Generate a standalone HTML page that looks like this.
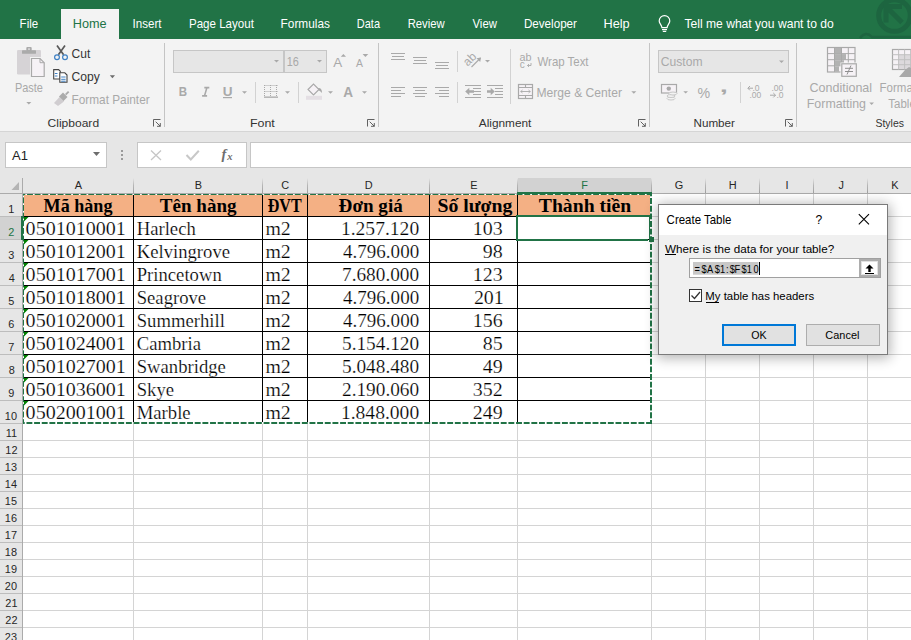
<!DOCTYPE html><html><head><meta charset="utf-8"><style>
*{margin:0;padding:0}html,body{width:911px;height:640px;overflow:hidden;background:#fff}
svg{display:block}text{white-space:pre}
</style></head><body><svg width="911" height="640" viewBox="0 0 911 640" shape-rendering="auto">
<defs><linearGradient id="hsep" x1="0" y1="0" x2="0" y2="1"><stop offset="0" stop-color="#E6E6E6"/><stop offset="0.5" stop-color="#B5B5B5"/><stop offset="1" stop-color="#A0A0A0"/></linearGradient></defs>
<rect x="0" y="0" width="911" height="39" fill="#217346" />
<rect x="61" y="9" width="58" height="31" fill="#F3F3F3" />
<rect x="0" y="39" width="911" height="92" fill="#F3F3F3" />
<rect x="0" y="131" width="911" height="1" fill="#D5D5D5" />
<rect x="0" y="132" width="911" height="62" fill="#E6E6E6" />
<rect x="5" y="142" width="102" height="26" fill="#C6C6C6" />
<rect x="6" y="143" width="100" height="24" fill="#fff" />
<rect x="137" y="142" width="110" height="26" fill="#C6C6C6" />
<rect x="138" y="143" width="108" height="24" fill="#fff" />
<rect x="250" y="142" width="661" height="26" fill="#C6C6C6" />
<rect x="251" y="143" width="660" height="24" fill="#fff" />
<rect x="23" y="194" width="888" height="446" fill="#fff" />
<rect x="0" y="194" width="22" height="446" fill="#E6E6E6" />
<rect x="23" y="216" width="888" height="1" fill="#D4D4D4" />
<rect x="0" y="216" width="22" height="1" fill="#BDBDBD" />
<rect x="23" y="239" width="888" height="1" fill="#D4D4D4" />
<rect x="0" y="239" width="22" height="1" fill="#BDBDBD" />
<rect x="23" y="262" width="888" height="1" fill="#D4D4D4" />
<rect x="0" y="262" width="22" height="1" fill="#BDBDBD" />
<rect x="23" y="285" width="888" height="1" fill="#D4D4D4" />
<rect x="0" y="285" width="22" height="1" fill="#BDBDBD" />
<rect x="23" y="308" width="888" height="1" fill="#D4D4D4" />
<rect x="0" y="308" width="22" height="1" fill="#BDBDBD" />
<rect x="23" y="331" width="888" height="1" fill="#D4D4D4" />
<rect x="0" y="331" width="22" height="1" fill="#BDBDBD" />
<rect x="23" y="354" width="888" height="1" fill="#D4D4D4" />
<rect x="0" y="354" width="22" height="1" fill="#BDBDBD" />
<rect x="23" y="377" width="888" height="1" fill="#D4D4D4" />
<rect x="0" y="377" width="22" height="1" fill="#BDBDBD" />
<rect x="23" y="400" width="888" height="1" fill="#D4D4D4" />
<rect x="0" y="400" width="22" height="1" fill="#BDBDBD" />
<rect x="23" y="423" width="888" height="1" fill="#D4D4D4" />
<rect x="0" y="423" width="22" height="1" fill="#BDBDBD" />
<rect x="23" y="440" width="888" height="1" fill="#D4D4D4" />
<rect x="0" y="440" width="22" height="1" fill="#BDBDBD" />
<rect x="23" y="457" width="888" height="1" fill="#D4D4D4" />
<rect x="0" y="457" width="22" height="1" fill="#BDBDBD" />
<rect x="23" y="474" width="888" height="1" fill="#D4D4D4" />
<rect x="0" y="474" width="22" height="1" fill="#BDBDBD" />
<rect x="23" y="491" width="888" height="1" fill="#D4D4D4" />
<rect x="0" y="491" width="22" height="1" fill="#BDBDBD" />
<rect x="23" y="508" width="888" height="1" fill="#D4D4D4" />
<rect x="0" y="508" width="22" height="1" fill="#BDBDBD" />
<rect x="23" y="525" width="888" height="1" fill="#D4D4D4" />
<rect x="0" y="525" width="22" height="1" fill="#BDBDBD" />
<rect x="23" y="542" width="888" height="1" fill="#D4D4D4" />
<rect x="0" y="542" width="22" height="1" fill="#BDBDBD" />
<rect x="23" y="559" width="888" height="1" fill="#D4D4D4" />
<rect x="0" y="559" width="22" height="1" fill="#BDBDBD" />
<rect x="23" y="576" width="888" height="1" fill="#D4D4D4" />
<rect x="0" y="576" width="22" height="1" fill="#BDBDBD" />
<rect x="23" y="593" width="888" height="1" fill="#D4D4D4" />
<rect x="0" y="593" width="22" height="1" fill="#BDBDBD" />
<rect x="23" y="610" width="888" height="1" fill="#D4D4D4" />
<rect x="0" y="610" width="22" height="1" fill="#BDBDBD" />
<rect x="23" y="627" width="888" height="1" fill="#D4D4D4" />
<rect x="0" y="627" width="22" height="1" fill="#BDBDBD" />
<rect x="133" y="194" width="1" height="446" fill="#D4D4D4" />
<rect x="133" y="178" width="1" height="15" fill="url(#hsep)" />
<rect x="262" y="194" width="1" height="446" fill="#D4D4D4" />
<rect x="262" y="178" width="1" height="15" fill="url(#hsep)" />
<rect x="307" y="194" width="1" height="446" fill="#D4D4D4" />
<rect x="307" y="178" width="1" height="15" fill="url(#hsep)" />
<rect x="429" y="194" width="1" height="446" fill="#D4D4D4" />
<rect x="429" y="178" width="1" height="15" fill="url(#hsep)" />
<rect x="517" y="194" width="1" height="446" fill="#D4D4D4" />
<rect x="517" y="178" width="1" height="15" fill="url(#hsep)" />
<rect x="651" y="194" width="1" height="446" fill="#D4D4D4" />
<rect x="651" y="178" width="1" height="15" fill="url(#hsep)" />
<rect x="705" y="194" width="1" height="446" fill="#D4D4D4" />
<rect x="705" y="178" width="1" height="15" fill="url(#hsep)" />
<rect x="759" y="194" width="1" height="446" fill="#D4D4D4" />
<rect x="759" y="178" width="1" height="15" fill="url(#hsep)" />
<rect x="813" y="194" width="1" height="446" fill="#D4D4D4" />
<rect x="813" y="178" width="1" height="15" fill="url(#hsep)" />
<rect x="867" y="194" width="1" height="446" fill="#D4D4D4" />
<rect x="867" y="178" width="1" height="15" fill="url(#hsep)" />
<rect x="0" y="193" width="911" height="1" fill="#ABABAB" />
<rect x="22" y="178" width="1" height="462" fill="#ABABAB" />
<path d="M19 182 L19 190 L11.5 190 Z" fill="#B4B4B4"/>
<rect x="518" y="178" width="133" height="14" fill="#D2D2D2" />
<rect x="517" y="192" width="135" height="2" fill="#217346" />
<rect x="0" y="217" width="21" height="22" fill="#D2D2D2" />
<rect x="21" y="216" width="2" height="24" fill="#217346" />
<rect x="23" y="194" width="628" height="22" fill="#F4B084" />
<rect x="23" y="216" width="628" height="1" fill="#000" />
<rect x="23" y="239" width="628" height="1" fill="#000" />
<rect x="23" y="262" width="628" height="1" fill="#000" />
<rect x="23" y="285" width="628" height="1" fill="#000" />
<rect x="23" y="308" width="628" height="1" fill="#000" />
<rect x="23" y="331" width="628" height="1" fill="#000" />
<rect x="23" y="354" width="628" height="1" fill="#000" />
<rect x="23" y="377" width="628" height="1" fill="#000" />
<rect x="23" y="400" width="628" height="1" fill="#000" />
<rect x="133" y="194" width="1" height="229" fill="#000" />
<rect x="262" y="194" width="1" height="229" fill="#000" />
<rect x="307" y="194" width="1" height="229" fill="#000" />
<rect x="429" y="194" width="1" height="229" fill="#000" />
<rect x="517" y="194" width="1" height="229" fill="#000" />
<path d="M23 217 L28.5 217 L23 222.5 Z" fill="#008000"/>
<path d="M23 240 L28.5 240 L23 245.5 Z" fill="#008000"/>
<path d="M23 263 L28.5 263 L23 268.5 Z" fill="#008000"/>
<path d="M23 286 L28.5 286 L23 291.5 Z" fill="#008000"/>
<path d="M23 309 L28.5 309 L23 314.5 Z" fill="#008000"/>
<path d="M23 332 L28.5 332 L23 337.5 Z" fill="#008000"/>
<path d="M23 355 L28.5 355 L23 360.5 Z" fill="#008000"/>
<path d="M23 378 L28.5 378 L23 383.5 Z" fill="#008000"/>
<path d="M23 401 L28.5 401 L23 406.5 Z" fill="#008000"/>
<rect x="516" y="215" width="134" height="2" fill="#217346" />
<rect x="516" y="239" width="132" height="2" fill="#217346" />
<rect x="516" y="215" width="2" height="26" fill="#217346" />
<g fill="none" stroke-width="1">
<line x1="23" y1="194.5" x2="651" y2="194.5" stroke="#fff"/>
<line x1="23" y1="194.5" x2="651" y2="194.5" stroke="#217346" stroke-dasharray="5.9 1.75" stroke-dashoffset="3.6"/>
<line x1="23.5" y1="194" x2="23.5" y2="424" stroke="#fff"/>
<line x1="23.5" y1="194" x2="23.5" y2="424" stroke="#217346" stroke-dasharray="5.9 1.75" stroke-dashoffset="4.3"/>
</g><g fill="none" stroke-width="2">
<line x1="651" y1="194" x2="651" y2="424" stroke="#fff" stroke-width="2"/>
<line x1="651" y1="194" x2="651" y2="424" stroke="#217346" stroke-width="2" stroke-dasharray="5.9 1.75" stroke-dashoffset="-4.1"/>
<line x1="23" y1="423" x2="652" y2="423" stroke="#fff"/>
<line x1="652" y1="423" x2="23" y2="423" stroke="#217346" stroke-dasharray="5.9 1.75"/>
</g>
<rect x="649" y="215" width="1" height="25" fill="#217346" />
<rect x="649" y="237" width="5" height="5" fill="#217346" />
<filter id="sh" x="-30%" y="-30%" width="160%" height="160%"><feGaussianBlur stdDeviation="6.5"/></filter>
<rect x="657" y="204" width="233" height="154" fill="#000" opacity="0.3" filter="url(#sh)"/>
<rect x="658" y="204" width="230" height="151" fill="#7A7A7A" />
<rect x="659" y="205" width="228" height="149" fill="#F0F0F0" />
<rect x="659" y="205" width="228" height="30" fill="#fff" />
<path d="M858.8 214.2 L869 224.4 M869 214.2 L858.8 224.4" stroke="#000" stroke-width="1.1" fill="none"/>
<rect x="665" y="254" width="11" height="1" fill="#000" />
<rect x="706" y="302" width="13" height="1" fill="#000" />
<rect x="689" y="258" width="192" height="20" fill="#A0A0A0" />
<rect x="690" y="259" width="190" height="18" fill="#fff" />
<rect x="693" y="262" width="65.5" height="12.7" fill="#C8C8C8" />
<rect x="759" y="262" width="1" height="13" fill="#000" />
<rect x="859" y="259" width="21" height="18" fill="#ADADAD" />
<rect x="861" y="261" width="17" height="14" fill="#E1E1E1" />
<rect x="862" y="262" width="15" height="12" fill="#fff" />
<path d="M869.5 264.5 L865.5 268.5 L868.3 268.5 L868.3 272 L870.7 272 L870.7 268.5 L873.5 268.5 Z" fill="#000"/>
<rect x="865" y="273" width="9" height="1" fill="#000" />
<rect x="689" y="289" width="13" height="13" fill="#333" />
<rect x="690" y="290" width="11" height="11" fill="#fff" />
<path d="M691.5 295.5 L694.5 298.5 L700 292" stroke="#333" stroke-width="1.3" fill="none"/>
<rect x="722" y="324" width="74" height="22" fill="#0078D7" />
<rect x="724" y="326" width="70" height="18" fill="#E1E1E1" />
<rect x="806" y="324" width="74" height="22" fill="#ADADAD" />
<rect x="807" y="325" width="72" height="20" fill="#E1E1E1" />
<g fill="none" stroke="#1D6540" stroke-width="5"><circle cx="894.5" cy="15.5" r="15.8"/><path d="M886 22.5 V6.5 H902 M886.5 7 L902 22.5"/></g>
<path d="M860 38 Q866 30.5 872 37 L911 37" stroke="#1D6540" stroke-width="2.4" fill="none"/>
<g fill="none" stroke="#fff" stroke-width="1.2"><path d="M661.9 27.6 C661.9 25 659.2 23.6 659.2 20.9 A5.3 5.3 0 0 1 669.8 20.9 C669.8 23.6 667.1 25 667.1 27.6 Z"/><path d="M662 29.6 H667"/><path d="M662.8 31.4 H666.2"/></g>
<rect x="17" y="50" width="24" height="24.5" rx="1.2" fill="#D6D3D6"/>
<rect x="22" y="50.2" width="14" height="3.6" rx="0.6" fill="#ABABAB"/>
<rect x="26.3" y="47" width="5.4" height="4" rx="1" fill="#ABABAB"/><rect x="28.3" y="48.4" width="1.4" height="1.4" fill="#F3F3F3"/>
<path d="M30 57 H40.5 L45.7 62.2 V78 H30 Z" fill="#F3F3F3"/>
<path d="M31.5 58.5 H40 L44.2 62.7 V76.5 H31.5 Z" fill="#F6F2F6" stroke="#A9A9A9" stroke-width="1.2"/>
<path d="M40 58.5 V62.7 H44.2" fill="none" stroke="#A9A9A9" stroke-width="1"/>
<path d="M26.3 102 H31.3 L28.8 104.6 Z" fill="#A9A9A9"/>
<path d="M57 45.5 L63.6 54.8 M65 45.5 L58.4 54.8" stroke="#595959" stroke-width="1.7" fill="none"/>
<g fill="none" stroke="#3E80C4" stroke-width="1.2"><circle cx="57" cy="57.2" r="2.4"/><circle cx="65" cy="57.2" r="2.4"/></g>
<path d="M53.7 69.6 H58.6 L60.3 71.3 V79 H53.7 Z" fill="#fff" stroke="#444" stroke-width="1.1"/>
<path d="M59.8 72.8 H64.8 L67 75 V82.2 H59.8 Z" fill="#fff" stroke="#444" stroke-width="1.1"/>
<g stroke="#3E80C4" stroke-width="1"><path d="M54.8 73.5 H57.5 M54.8 76 H57.5"/><path d="M61.2 77 H65.6 M61.2 79.3 H65.6 M61.2 81.2 H65.6"/></g>
<path d="M109.8 75.2 H115 L112.4 78.2 Z" fill="#6D6D6D"/>
<path d="M54 103 L59.5 97 L64 101.5 L58 106 Z" fill="#D0CDD0"/>
<path d="M59 96.5 L63 92.5 L67.5 97 L63.5 101 Z" fill="#ABABAB"/>
<path d="M65 94 L68 91 L69.3 92.3 L66.3 95.3 Z" fill="#ABABAB"/>
<g fill="none" stroke="#505050" stroke-width="0.9"><path d="M153.5 126.5 V119.5 H160.5"/><path d="M155.7 121.7 L160.3 126.3 M157.0 126.3 H160.3 V123.0"/></g>
<g fill="none" stroke="#505050" stroke-width="0.9"><path d="M367.5 126.5 V119.5 H374.5"/><path d="M369.7 121.7 L374.3 126.3 M371.0 126.3 H374.3 V123.0"/></g>
<g fill="none" stroke="#505050" stroke-width="0.9"><path d="M638.5 126.5 V119.5 H645.5"/><path d="M640.7 121.7 L645.3 126.3 M642.0 126.3 H645.3 V123.0"/></g>
<g fill="none" stroke="#505050" stroke-width="0.9"><path d="M785.5 126.5 V119.5 H792.5"/><path d="M787.7 121.7 L792.3 126.3 M789.0 126.3 H792.3 V123.0"/></g>
<rect x="164" y="43" width="1" height="84" fill="#C4C4C4" />
<rect x="378" y="43" width="1" height="84" fill="#C4C4C4" />
<rect x="649" y="43" width="1" height="84" fill="#C4C4C4" />
<rect x="796" y="43" width="1" height="84" fill="#C4C4C4" />
<rect x="173" y="50" width="154" height="23" fill="#C6C6C6" />
<rect x="174" y="51" width="109" height="21" fill="#E6E6E6" />
<rect x="285" y="51" width="41" height="21" fill="#E6E6E6" />
<path d="M274 60 H279 L276.5 62.6 Z" fill="#A9A9A9"/><path d="M317 60 H322 L319.5 62.6 Z" fill="#A9A9A9"/>
<path d="M340.8 56.8 L343.4 53.9 L346 56.8 Z" fill="#A9A9A9"/><path d="M362.6 53.9 H368.3 L365.4 57 Z" fill="#A9A9A9"/>
<path d="M242 91.2 H247 L244.5 93.8 Z" fill="#A9A9A9"/>
<path d="M285 91.2 H290 L287.5 93.8 Z" fill="#A9A9A9"/>
<path d="M328 91.2 H333 L330.5 93.8 Z" fill="#A9A9A9"/>
<path d="M362 91.2 H367 L364.5 93.8 Z" fill="#A9A9A9"/>
<rect x="255" y="82" width="1" height="21" fill="#D2D2D2" />
<rect x="298" y="82" width="1" height="21" fill="#D2D2D2" />
<path d="M204.3 87.6 H209.3 M206.9 87.6 L204.5 95.9 M202.1 95.9 H207.1" stroke="#A9A9A9" stroke-width="1.6" fill="none"/>
<rect x="223" y="97" width="9" height="1.2" fill="#A9A9A9" />
<g fill="none" stroke="#A9A9A9" stroke-width="1" stroke-dasharray="1 1"><path d="M264.5 85.5 H277.5 M264.5 91.5 H277.5 M264.5 85 V97 M270.5 85 V97 M276.5 85 V97"/></g>
<rect x="264" y="96.5" width="14" height="1.3" fill="#A9A9A9" />
<g fill="none" stroke="#A9A9A9" stroke-width="1.1"><path d="M313.5 84.5 V89"/><path d="M308 89.5 L313.5 84 L319 89.5 L313.5 95 Z" fill="#F6F2F6"/></g>
<path d="M318 88 Q322 87.5 322 93 Q320.5 91 319 90.5 Z" fill="#A9A9A9"/>
<rect x="306" y="95.8" width="16" height="4" fill="#E4DFE4" />
<rect x="391" y="53" width="14" height="1" fill="#A9A9A9" />
<rect x="392" y="56" width="12" height="1" fill="#A9A9A9" />
<rect x="391" y="59" width="14" height="1" fill="#A9A9A9" />
<rect x="413" y="57" width="14" height="1" fill="#A9A9A9" />
<rect x="414" y="60" width="12" height="1" fill="#A9A9A9" />
<rect x="413" y="63" width="14" height="1" fill="#A9A9A9" />
<rect x="435" y="62" width="14" height="1" fill="#A9A9A9" />
<rect x="436" y="65" width="12" height="1" fill="#A9A9A9" />
<rect x="435" y="68" width="14" height="1" fill="#A9A9A9" />
<rect x="391" y="87" width="14" height="1" fill="#A9A9A9" />
<rect x="391" y="90" width="10" height="1" fill="#A9A9A9" />
<rect x="391" y="93" width="14" height="1" fill="#A9A9A9" />
<rect x="391" y="96" width="10" height="1" fill="#A9A9A9" />
<rect x="413" y="87" width="14" height="1" fill="#A9A9A9" />
<rect x="415" y="90" width="10" height="1" fill="#A9A9A9" />
<rect x="413" y="93" width="14" height="1" fill="#A9A9A9" />
<rect x="415" y="96" width="10" height="1" fill="#A9A9A9" />
<rect x="435" y="87" width="14" height="1" fill="#A9A9A9" />
<rect x="439" y="90" width="10" height="1" fill="#A9A9A9" />
<rect x="435" y="93" width="14" height="1" fill="#A9A9A9" />
<rect x="439" y="96" width="10" height="1" fill="#A9A9A9" />
<rect x="457" y="51" width="1" height="21" fill="#D2D2D2" />
<rect x="457" y="82" width="1" height="21" fill="#D2D2D2" />
<rect x="510" y="49" width="1" height="55" fill="#D2D2D2" />
<text transform="translate(467.8 66.8) rotate(-45)" font-family="Liberation Sans" font-size="12" fill="#A9A9A9">ab</text>
<path d="M471.5 67 L480.5 58" stroke="#A9A9A9" stroke-width="1.1"/><path d="M481 57.5 L476.5 58.3 L480.2 62 Z" fill="#A9A9A9"/>
<path d="M485 60 H490 L487.5 62.6 Z" fill="#A9A9A9"/>
<rect x="465" y="85" width="16" height="1" fill="#A9A9A9" />
<rect x="473" y="88" width="8" height="1" fill="#A9A9A9" />
<rect x="473" y="91" width="8" height="1" fill="#A9A9A9" />
<rect x="473" y="94" width="8" height="1" fill="#A9A9A9" />
<rect x="465" y="97" width="16" height="1" fill="#A9A9A9" />
<rect x="487" y="85" width="16" height="1" fill="#A9A9A9" />
<rect x="495" y="88" width="8" height="1" fill="#A9A9A9" />
<rect x="495" y="91" width="8" height="1" fill="#A9A9A9" />
<rect x="495" y="94" width="8" height="1" fill="#A9A9A9" />
<rect x="487" y="97" width="16" height="1" fill="#A9A9A9" />
<path d="M465.2 91.5 L469.3 87.8 V90.3 H474 V92.7 H469.3 V95.2 Z" fill="#A9A9A9"/>
<path d="M494.8 91.5 L490.7 87.8 V90.3 H487 V92.7 H490.7 V95.2 Z" fill="#A9A9A9"/>
<text x="519.5" y="60.5" font-family="Liberation Sans" font-size="10" fill="#A9A9A9" textLength="12" lengthAdjust="spacingAndGlyphs">ab</text>
<text x="519.8" y="68" font-family="Liberation Sans" font-size="10" fill="#A9A9A9">c</text>
<path d="M531 63 V65.5 H527.5 M529 64 L527.5 65.5 L529 67" fill="none" stroke="#A9A9A9" stroke-width="0.9"/>
<rect x="518.5" y="84.5" width="14" height="14" fill="#F6F2F6" stroke="#A9A9A9" stroke-width="1.2"/>
<path d="M518.5 87.5 H532.5 M518.5 95.5 H532.5 M525.5 84.5 V87.5 M525.5 95.5 V98.5" stroke="#A9A9A9" stroke-width="1.1" fill="none"/>
<path d="M520.5 91.5 H530.5 M522.5 90 L520.8 91.5 L522.5 93 M528.5 90 L530.2 91.5 L528.5 93" stroke="#A9A9A9" stroke-width="0.9" fill="none"/>
<path d="M631.3 91.2 H636.3 L633.8 93.8 Z" fill="#A9A9A9"/>
<rect x="658" y="50" width="131" height="23" fill="#C6C6C6" />
<rect x="659" y="51" width="129" height="21" fill="#E6E6E6" />
<path d="M779 60.5 H784 L781.5 63 Z" fill="#A9A9A9"/>
<rect x="661.5" y="84.5" width="15" height="8.5" fill="#F6F2F6" stroke="#A9A9A9" stroke-width="1.2"/>
<circle cx="668.8" cy="88.6" r="2.2" fill="#A9A9A9"/>
<g fill="#F3F3F3" stroke="#C8C8C8" stroke-width="1"><ellipse cx="671" cy="98.5" rx="4" ry="1.5"/><ellipse cx="671" cy="96" rx="4" ry="1.5"/><ellipse cx="673" cy="93.5" rx="4" ry="1.5"/></g>
<path d="M683.3 91.3 H688 L685.65 93.6 Z" fill="#A9A9A9"/>
<rect x="740" y="82" width="1" height="21" fill="#D2D2D2" />
<text x="752.5" y="91.2" font-family="Liberation Sans" font-size="8.5" fill="#A9A9A9">.0</text><text x="749.5" y="98.2" font-family="Liberation Sans" font-size="8.5" fill="#A9A9A9">.00</text>
<path d="M748 88.2 H753 M750 86 L747.8 88.2 L750 90.4" stroke="#A9A9A9" stroke-width="1" fill="none"/>
<text x="771.5" y="91.2" font-family="Liberation Sans" font-size="8.5" fill="#A9A9A9">.00</text><text x="776.5" y="98.2" font-family="Liberation Sans" font-size="8.5" fill="#A9A9A9">.0</text>
<path d="M770 95.2 H775.5 M773.3 93 L775.5 95.2 L773.3 97.4" stroke="#A9A9A9" stroke-width="1" fill="none"/>
<path d="M869.3 102.5 H874 L871.65 105 Z" fill="#A9A9A9"/>
<rect x="827.5" y="47.5" width="27.5" height="24.5" fill="#F6F2F6" stroke="#A9A9A9" stroke-width="1.2"/>
<rect x="835" y="48" width="6" height="5.5" fill="#B2B2B2"/><rect x="835" y="54.1" width="11" height="5.5" fill="#B2B2B2"/><rect x="835" y="60.2" width="9" height="5.5" fill="#B2B2B2"/><rect x="835" y="66.3" width="4" height="5.5" fill="#B2B2B2"/>
<path d="M834.5 47.5 V72 M841.5 47.5 V72 M848.3 47.5 V72 M827.5 53.6 H855 M827.5 59.7 H855 M827.5 65.8 H855" stroke="#A9A9A9" stroke-width="1" fill="none"/>
<rect x="840.5" y="62.5" width="17" height="15" fill="#F3F3F3"/><rect x="841.8" y="63.8" width="14.5" height="12.5" fill="#F6F2F6" stroke="#A9A9A9" stroke-width="1.2"/>
<path d="M845 68.3 H853 M845 71.5 H853 M851 65.5 L847 74.5" stroke="#8F8F8F" stroke-width="1" fill="none"/>
<rect x="892.5" y="49.5" width="22" height="20" fill="#F6F2F6" stroke="#A9A9A9" stroke-width="1.2"/>
<rect x="899" y="55" width="12" height="14" fill="#DCD9DC"/>
<path d="M898.6 49.5 V69.5 M904.6 49.5 V69.5 M910.6 49.5 V69.5 M892.5 54.7 H911 M892.5 59.7 H911 M892.5 64.7 H911" stroke="#C0C0C0" stroke-width="1" fill="none"/>
<path d="M899 77 L905 70 L909 67 L911 68 L911 77 Z" fill="#A9A9A9"/>
<path d="M93 152 H100 L96.5 156 Z" fill="#6D6D6D"/>
<rect x="121" y="150" width="2" height="2" fill="#9A9A9A" />
<rect x="121" y="154" width="2" height="2" fill="#9A9A9A" />
<rect x="121" y="158" width="2" height="2" fill="#9A9A9A" />
<path d="M151 150.5 L161 160 M161 150.5 L151 160" stroke="#C6C6C6" stroke-width="1.3" fill="none"/>
<path d="M186.5 155 L190.8 159.5 L198.8 150.8" stroke="#C8C8C8" stroke-width="2" fill="none"/>
<text x="221.5" y="159" font-family="Liberation Serif" font-style="italic" font-weight="bold" font-size="14.5" fill="#6D6D6D">f</text><text x="227.3" y="159.5" font-family="Liberation Serif" font-style="italic" font-weight="bold" font-size="10.5" fill="#6D6D6D">x</text>
<rect x="250" y="142" width="1" height="26" fill="#C6C6C6" />
<text transform="translate(19.61 28) scale(0.8850 1)" font-family="Liberation Sans" font-size="13" fill="#fff">File</text>
<text transform="translate(132.61 28) scale(0.8906 1)" font-family="Liberation Sans" font-size="13" fill="#fff">Insert</text>
<text transform="translate(188.91 28) scale(0.8917 1)" font-family="Liberation Sans" font-size="13" fill="#fff">Page Layout</text>
<text transform="translate(280.59 28) scale(0.9113 1)" font-family="Liberation Sans" font-size="13" fill="#fff">Formulas</text>
<text transform="translate(356.86 28) scale(0.8444 1)" font-family="Liberation Sans" font-size="13" fill="#fff">Data</text>
<text transform="translate(407.63 28) scale(0.8690 1)" font-family="Liberation Sans" font-size="13" fill="#fff">Review</text>
<text transform="translate(472.50 28) scale(0.8750 1)" font-family="Liberation Sans" font-size="13" fill="#fff">View</text>
<text transform="translate(523.90 28) scale(0.8966 1)" font-family="Liberation Sans" font-size="13" fill="#fff">Developer</text>
<text transform="translate(603.52 28) scale(0.9800 1)" font-family="Liberation Sans" font-size="13" fill="#fff">Help</text>
<text transform="translate(684.50 28) scale(0.9313 1)" font-family="Liberation Sans" font-size="13" fill="#fff">Tell me what you want to do</text>
<text transform="translate(72.82 28) scale(0.9758 1)" font-family="Liberation Sans" font-size="13" fill="#217346">Home</text>
<text transform="translate(14.92 91.8) scale(0.8774 1)" font-family="Liberation Sans" font-size="12.5" fill="#A9A9A9">Paste</text>
<text transform="translate(71.54 58) scale(0.9632 1)" font-family="Liberation Sans" font-size="12.5" fill="#333333">Cut</text>
<text transform="translate(71.53 80.5) scale(0.9714 1)" font-family="Liberation Sans" font-size="12.5" fill="#333333">Copy</text>
<text transform="translate(71.55 104) scale(0.9451 1)" font-family="Liberation Sans" font-size="12.5" fill="#A9A9A9">Format Painter</text>
<text transform="translate(47.54 127) scale(1.0574 1)" font-family="Liberation Sans" font-size="11.4" fill="#333333">Clipboard</text>
<text transform="translate(286.73 65.75) scale(0.8692 1)" font-family="Liberation Sans" font-size="12.5" fill="#A9A9A9">16</text>
<text transform="translate(249.91 127) scale(1.0909 1)" font-family="Liberation Sans" font-size="11.4" fill="#333333">Font</text>
<text transform="translate(537.50 65.9) scale(0.9152 1)" font-family="Liberation Sans" font-size="12.5" fill="#A9A9A9">Wrap Text</text>
<text transform="translate(536.53 96.9) scale(0.9684 1)" font-family="Liberation Sans" font-size="12.5" fill="#A9A9A9">Merge &amp; Center</text>
<text transform="translate(478.75 126.75) scale(1.0392 1)" font-family="Liberation Sans" font-size="11.4" fill="#333333">Alignment</text>
<text transform="translate(660.78 65.9) scale(0.9702 1)" font-family="Liberation Sans" font-size="12.5" fill="#A9A9A9">Custom</text>
<text transform="translate(693.47 126.75) scale(1.0256 1)" font-family="Liberation Sans" font-size="11.4" fill="#333333">Number</text>
<text transform="translate(809.50 92) scale(1.0016 1)" font-family="Liberation Sans" font-size="12.5" fill="#A9A9A9">Conditional</text>
<text transform="translate(806.81 107.7) scale(0.9914 1)" font-family="Liberation Sans" font-size="12.5" fill="#A9A9A9">Formatting</text>
<text transform="translate(879.58 92) scale(0.9200 1)" font-family="Liberation Sans" font-size="12.5" fill="#A9A9A9">Format as</text>
<text transform="translate(888.30 107.7) scale(0.9200 1)" font-family="Liberation Sans" font-size="12.5" fill="#A9A9A9">Table</text>
<text transform="translate(875.48 126.6) scale(0.9200 1)" font-family="Liberation Sans" font-size="11.4" fill="#333333">Styles</text>
<text transform="translate(178.77 96) scale(0.9250 1)" font-family="Liberation Sans" font-size="12.5" fill="#A9A9A9" font-weight="bold">B</text>
<text transform="translate(222.71 96) scale(1.0857 1)" font-family="Liberation Sans" font-size="12.5" fill="#A9A9A9" font-weight="bold">U</text>
<text transform="translate(333.30 66.75) scale(1.0333 1)" font-family="Liberation Sans" font-size="13" fill="#A9A9A9">A</text>
<text transform="translate(356.00 66.75) scale(1.0429 1)" font-family="Liberation Sans" font-size="10" fill="#A9A9A9">A</text>
<text transform="translate(343.30 97) scale(0.9700 1)" font-family="Liberation Sans" font-size="14" fill="#A9A9A9" font-weight="bold">A</text>
<text transform="translate(697.50 97.8) scale(1.0167 1)" font-family="Liberation Sans" font-size="14" fill="#A9A9A9">%</text>
<text transform="translate(719.67 91.8) scale(1.8333 1)" font-family="Liberation Sans" font-size="16" fill="#A9A9A9" font-weight="bold">,</text>
<text transform="translate(12.00 160) scale(1.0000 1)" font-family="Liberation Sans" font-size="13" fill="#222">A1</text>
<text transform="translate(74.70 189) scale(0.9500 1)" font-family="Liberation Sans" font-size="11.5" fill="#262626">A</text>
<text transform="translate(194.70 189) scale(0.9500 1)" font-family="Liberation Sans" font-size="11.5" fill="#262626">B</text>
<text transform="translate(281.23 189) scale(0.9500 1)" font-family="Liberation Sans" font-size="11.5" fill="#262626">C</text>
<text transform="translate(364.73 189) scale(0.9500 1)" font-family="Liberation Sans" font-size="11.5" fill="#262626">D</text>
<text transform="translate(470.20 189) scale(0.9500 1)" font-family="Liberation Sans" font-size="11.5" fill="#262626">E</text>
<text transform="translate(581.20 189) scale(0.9500 1)" font-family="Liberation Sans" font-size="11.5" fill="#217346">F</text>
<text transform="translate(674.73 189) scale(0.9500 1)" font-family="Liberation Sans" font-size="11.5" fill="#262626">G</text>
<text transform="translate(728.73 189) scale(0.9500 1)" font-family="Liberation Sans" font-size="11.5" fill="#262626">H</text>
<text transform="translate(785.58 189) scale(0.9500 1)" font-family="Liberation Sans" font-size="11.5" fill="#262626">I</text>
<text transform="translate(838.62 189) scale(0.9500 1)" font-family="Liberation Sans" font-size="11.5" fill="#262626">J</text>
<text transform="translate(891.20 189) scale(0.9500 1)" font-family="Liberation Sans" font-size="11.5" fill="#262626">K</text>
<text transform="translate(8.18 213) scale(0.9500 1)" font-family="Liberation Sans" font-size="11.5" fill="#262626">1</text>
<text transform="translate(8.18 236) scale(0.9500 1)" font-family="Liberation Sans" font-size="11.5" fill="#217346">2</text>
<text transform="translate(8.18 259) scale(0.9500 1)" font-family="Liberation Sans" font-size="11.5" fill="#262626">3</text>
<text transform="translate(8.65 282) scale(0.9500 1)" font-family="Liberation Sans" font-size="11.5" fill="#262626">4</text>
<text transform="translate(8.18 305) scale(0.9500 1)" font-family="Liberation Sans" font-size="11.5" fill="#262626">5</text>
<text transform="translate(8.18 328) scale(0.9500 1)" font-family="Liberation Sans" font-size="11.5" fill="#262626">6</text>
<text transform="translate(8.18 351) scale(0.9500 1)" font-family="Liberation Sans" font-size="11.5" fill="#262626">7</text>
<text transform="translate(8.65 374) scale(0.9500 1)" font-family="Liberation Sans" font-size="11.5" fill="#262626">8</text>
<text transform="translate(8.18 397) scale(0.9500 1)" font-family="Liberation Sans" font-size="11.5" fill="#262626">9</text>
<text transform="translate(4.85 420) scale(0.9500 1)" font-family="Liberation Sans" font-size="11.5" fill="#262626">10</text>
<text transform="translate(5.80 437) scale(0.9500 1)" font-family="Liberation Sans" font-size="11.5" fill="#262626">11</text>
<text transform="translate(5.33 454) scale(0.9500 1)" font-family="Liberation Sans" font-size="11.5" fill="#262626">12</text>
<text transform="translate(4.85 471) scale(0.9500 1)" font-family="Liberation Sans" font-size="11.5" fill="#262626">13</text>
<text transform="translate(4.85 488) scale(0.9500 1)" font-family="Liberation Sans" font-size="11.5" fill="#262626">14</text>
<text transform="translate(4.85 505) scale(0.9500 1)" font-family="Liberation Sans" font-size="11.5" fill="#262626">15</text>
<text transform="translate(4.85 522) scale(0.9500 1)" font-family="Liberation Sans" font-size="11.5" fill="#262626">16</text>
<text transform="translate(4.85 539) scale(0.9500 1)" font-family="Liberation Sans" font-size="11.5" fill="#262626">17</text>
<text transform="translate(4.85 556) scale(0.9500 1)" font-family="Liberation Sans" font-size="11.5" fill="#262626">18</text>
<text transform="translate(4.85 573) scale(0.9500 1)" font-family="Liberation Sans" font-size="11.5" fill="#262626">19</text>
<text transform="translate(4.85 590) scale(0.9500 1)" font-family="Liberation Sans" font-size="11.5" fill="#262626">20</text>
<text transform="translate(5.33 607) scale(0.9500 1)" font-family="Liberation Sans" font-size="11.5" fill="#262626">21</text>
<text transform="translate(5.33 624) scale(0.9500 1)" font-family="Liberation Sans" font-size="11.5" fill="#262626">22</text>
<text transform="translate(4.85 641) scale(0.9500 1)" font-family="Liberation Sans" font-size="11.5" fill="#262626">23</text>
<text transform="translate(4.85 658) scale(0.9500 1)" font-family="Liberation Sans" font-size="11.5" fill="#262626">24</text>
<text transform="translate(25.62 234.5) scale(1.1270 1)" font-family="Liberation Serif" font-size="17.8" fill="#000" stroke="#fff" stroke-width="0.2">0501010001</text>
<text transform="translate(136.70 234.5) scale(1.0490 1)" font-family="Liberation Serif" font-size="17.8" fill="#000" stroke="#fff" stroke-width="0.2">Harlech</text>
<text transform="translate(265.39 234.5) scale(1.1143 1)" font-family="Liberation Serif" font-size="17.8" fill="#000" stroke="#fff" stroke-width="0.2">m2</text>
<text transform="translate(340.90 234.5) scale(1.1000 1)" font-family="Liberation Serif" font-size="17.8" fill="#000" stroke="#fff" stroke-width="0.2">1.257.120</text>
<text transform="translate(472.78 234.5) scale(1.1200 1)" font-family="Liberation Serif" font-size="17.8" fill="#000" stroke="#fff" stroke-width="0.2">103</text>
<text transform="translate(25.62 257.5) scale(1.1270 1)" font-family="Liberation Serif" font-size="17.8" fill="#000" stroke="#fff" stroke-width="0.2">0501012001</text>
<text transform="translate(136.70 257.5) scale(1.0490 1)" font-family="Liberation Serif" font-size="17.8" fill="#000" stroke="#fff" stroke-width="0.2">Kelvingrove</text>
<text transform="translate(265.39 257.5) scale(1.1143 1)" font-family="Liberation Serif" font-size="17.8" fill="#000" stroke="#fff" stroke-width="0.2">m2</text>
<text transform="translate(343.10 257.5) scale(1.0690 1)" font-family="Liberation Serif" font-size="17.8" fill="#000" stroke="#fff" stroke-width="0.2">4.796.000</text>
<text transform="translate(482.86 257.5) scale(1.1200 1)" font-family="Liberation Serif" font-size="17.8" fill="#000" stroke="#fff" stroke-width="0.2">98</text>
<text transform="translate(25.62 280.5) scale(1.1270 1)" font-family="Liberation Serif" font-size="17.8" fill="#000" stroke="#fff" stroke-width="0.2">0501017001</text>
<text transform="translate(136.70 280.5) scale(1.0490 1)" font-family="Liberation Serif" font-size="17.8" fill="#000" stroke="#fff" stroke-width="0.2">Princetown</text>
<text transform="translate(265.39 280.5) scale(1.1143 1)" font-family="Liberation Serif" font-size="17.8" fill="#000" stroke="#fff" stroke-width="0.2">m2</text>
<text transform="translate(342.02 280.5) scale(1.0843 1)" font-family="Liberation Serif" font-size="17.8" fill="#000" stroke="#fff" stroke-width="0.2">7.680.000</text>
<text transform="translate(472.78 280.5) scale(1.1200 1)" font-family="Liberation Serif" font-size="17.8" fill="#000" stroke="#fff" stroke-width="0.2">123</text>
<text transform="translate(25.62 303.5) scale(1.1270 1)" font-family="Liberation Serif" font-size="17.8" fill="#000" stroke="#fff" stroke-width="0.2">0501018001</text>
<text transform="translate(136.70 303.5) scale(1.0490 1)" font-family="Liberation Serif" font-size="17.8" fill="#000" stroke="#fff" stroke-width="0.2">Seagrove</text>
<text transform="translate(265.39 303.5) scale(1.1143 1)" font-family="Liberation Serif" font-size="17.8" fill="#000" stroke="#fff" stroke-width="0.2">m2</text>
<text transform="translate(343.10 303.5) scale(1.0690 1)" font-family="Liberation Serif" font-size="17.8" fill="#000" stroke="#fff" stroke-width="0.2">4.796.000</text>
<text transform="translate(473.90 303.5) scale(1.1200 1)" font-family="Liberation Serif" font-size="17.8" fill="#000" stroke="#fff" stroke-width="0.2">201</text>
<text transform="translate(25.62 326.5) scale(1.1270 1)" font-family="Liberation Serif" font-size="17.8" fill="#000" stroke="#fff" stroke-width="0.2">0501020001</text>
<text transform="translate(136.70 326.5) scale(1.0490 1)" font-family="Liberation Serif" font-size="17.8" fill="#000" stroke="#fff" stroke-width="0.2">Summerhill</text>
<text transform="translate(265.39 326.5) scale(1.1143 1)" font-family="Liberation Serif" font-size="17.8" fill="#000" stroke="#fff" stroke-width="0.2">m2</text>
<text transform="translate(343.10 326.5) scale(1.0690 1)" font-family="Liberation Serif" font-size="17.8" fill="#000" stroke="#fff" stroke-width="0.2">4.796.000</text>
<text transform="translate(472.78 326.5) scale(1.1200 1)" font-family="Liberation Serif" font-size="17.8" fill="#000" stroke="#fff" stroke-width="0.2">156</text>
<text transform="translate(25.62 349.5) scale(1.1270 1)" font-family="Liberation Serif" font-size="17.8" fill="#000" stroke="#fff" stroke-width="0.2">0501024001</text>
<text transform="translate(136.70 349.5) scale(1.0490 1)" font-family="Liberation Serif" font-size="17.8" fill="#000" stroke="#fff" stroke-width="0.2">Cambria</text>
<text transform="translate(265.39 349.5) scale(1.1143 1)" font-family="Liberation Serif" font-size="17.8" fill="#000" stroke="#fff" stroke-width="0.2">m2</text>
<text transform="translate(342.02 349.5) scale(1.0843 1)" font-family="Liberation Serif" font-size="17.8" fill="#000" stroke="#fff" stroke-width="0.2">5.154.120</text>
<text transform="translate(482.86 349.5) scale(1.1200 1)" font-family="Liberation Serif" font-size="17.8" fill="#000" stroke="#fff" stroke-width="0.2">85</text>
<text transform="translate(25.62 372.5) scale(1.1270 1)" font-family="Liberation Serif" font-size="17.8" fill="#000" stroke="#fff" stroke-width="0.2">0501027001</text>
<text transform="translate(136.70 372.5) scale(1.0490 1)" font-family="Liberation Serif" font-size="17.8" fill="#000" stroke="#fff" stroke-width="0.2">Swanbridge</text>
<text transform="translate(265.39 372.5) scale(1.1143 1)" font-family="Liberation Serif" font-size="17.8" fill="#000" stroke="#fff" stroke-width="0.2">m2</text>
<text transform="translate(342.02 372.5) scale(1.0843 1)" font-family="Liberation Serif" font-size="17.8" fill="#000" stroke="#fff" stroke-width="0.2">5.048.480</text>
<text transform="translate(482.86 372.5) scale(1.1200 1)" font-family="Liberation Serif" font-size="17.8" fill="#000" stroke="#fff" stroke-width="0.2">49</text>
<text transform="translate(25.62 395.5) scale(1.1270 1)" font-family="Liberation Serif" font-size="17.8" fill="#000" stroke="#fff" stroke-width="0.2">0501036001</text>
<text transform="translate(136.70 395.5) scale(1.0490 1)" font-family="Liberation Serif" font-size="17.8" fill="#000" stroke="#fff" stroke-width="0.2">Skye</text>
<text transform="translate(265.39 395.5) scale(1.1143 1)" font-family="Liberation Serif" font-size="17.8" fill="#000" stroke="#fff" stroke-width="0.2">m2</text>
<text transform="translate(342.02 395.5) scale(1.0843 1)" font-family="Liberation Serif" font-size="17.8" fill="#000" stroke="#fff" stroke-width="0.2">2.190.060</text>
<text transform="translate(472.78 395.5) scale(1.1200 1)" font-family="Liberation Serif" font-size="17.8" fill="#000" stroke="#fff" stroke-width="0.2">352</text>
<text transform="translate(25.62 418.5) scale(1.1270 1)" font-family="Liberation Serif" font-size="17.8" fill="#000" stroke="#fff" stroke-width="0.2">0502001001</text>
<text transform="translate(136.70 418.5) scale(1.0490 1)" font-family="Liberation Serif" font-size="17.8" fill="#000" stroke="#fff" stroke-width="0.2">Marble</text>
<text transform="translate(265.39 418.5) scale(1.1143 1)" font-family="Liberation Serif" font-size="17.8" fill="#000" stroke="#fff" stroke-width="0.2">m2</text>
<text transform="translate(340.90 418.5) scale(1.1000 1)" font-family="Liberation Serif" font-size="17.8" fill="#000" stroke="#fff" stroke-width="0.2">1.848.000</text>
<text transform="translate(472.78 418.5) scale(1.1200 1)" font-family="Liberation Serif" font-size="17.8" fill="#000" stroke="#fff" stroke-width="0.2">249</text>
<text transform="translate(43.60 212) scale(1.0176 1)" font-family="Liberation Serif" font-size="17.8" fill="#000" font-weight="bold">Mã hàng</text>
<text transform="translate(159.75 212) scale(1.0715 1)" font-family="Liberation Serif" font-size="17.8" fill="#000" font-weight="bold">Tên hàng</text>
<text transform="translate(267.75 212) scale(0.9013 1)" font-family="Liberation Serif" font-size="17.8" fill="#000" font-weight="bold">ĐVT</text>
<text transform="translate(338.60 212) scale(1.0729 1)" font-family="Liberation Serif" font-size="17.8" fill="#000" font-weight="bold">Đơn giá</text>
<text transform="translate(437.39 212) scale(1.1121 1)" font-family="Liberation Serif" font-size="17.8" fill="#000" font-weight="bold">Số lượng</text>
<text transform="translate(538.75 212) scale(1.1066 1)" font-family="Liberation Serif" font-size="17.8" fill="#000" font-weight="bold">Thành tiền</text>
<text transform="translate(666.62 223.8) scale(0.8819 1)" font-family="Liberation Sans" font-size="13" fill="#000">Create Table</text>
<text transform="translate(815.47 224) scale(0.9333 1)" font-family="Liberation Sans" font-size="13" fill="#000">?</text>
<text transform="translate(665.00 252.8) scale(1.0060 1)" font-family="Liberation Sans" font-size="11.6" fill="#000">Where is the data for your table?</text>
<text transform="translate(694.50 273) scale(0.8000 1)" font-family="Liberation Sans" font-size="11.6" fill="#000">=</text>
<text transform="translate(701.60 273) scale(0.8000 1)" font-family="Liberation Sans" font-size="11.6" fill="#000">$</text>
<text transform="translate(707.00 273) scale(0.8000 1)" font-family="Liberation Sans" font-size="11.6" fill="#000">A</text>
<text transform="translate(714.80 273) scale(0.8000 1)" font-family="Liberation Sans" font-size="11.6" fill="#000">$</text>
<text transform="translate(719.95 273) scale(0.8000 1)" font-family="Liberation Sans" font-size="11.6" fill="#000">1</text>
<text transform="translate(726.00 273) scale(0.8000 1)" font-family="Liberation Sans" font-size="11.6" fill="#000">:</text>
<text transform="translate(729.70 273) scale(0.8000 1)" font-family="Liberation Sans" font-size="11.6" fill="#000">$</text>
<text transform="translate(734.40 273) scale(0.8000 1)" font-family="Liberation Sans" font-size="11.6" fill="#000">F</text>
<text transform="translate(741.60 273) scale(0.8000 1)" font-family="Liberation Sans" font-size="11.6" fill="#000">$</text>
<text transform="translate(746.75 273) scale(0.8000 1)" font-family="Liberation Sans" font-size="11.6" fill="#000">1</text>
<text transform="translate(753.50 273) scale(0.8000 1)" font-family="Liberation Sans" font-size="11.6" fill="#000">0</text>
<text transform="translate(705.32 300.4) scale(0.9818 1)" font-family="Liberation Sans" font-size="11.6" fill="#000">My table has headers</text>
<text transform="translate(751.30 338.6) scale(0.9188 1)" font-family="Liberation Sans" font-size="11.6" fill="#000">OK</text>
<text transform="translate(825.36 338.6) scale(0.9429 1)" font-family="Liberation Sans" font-size="11.6" fill="#000">Cancel</text>
</svg></body></html>
